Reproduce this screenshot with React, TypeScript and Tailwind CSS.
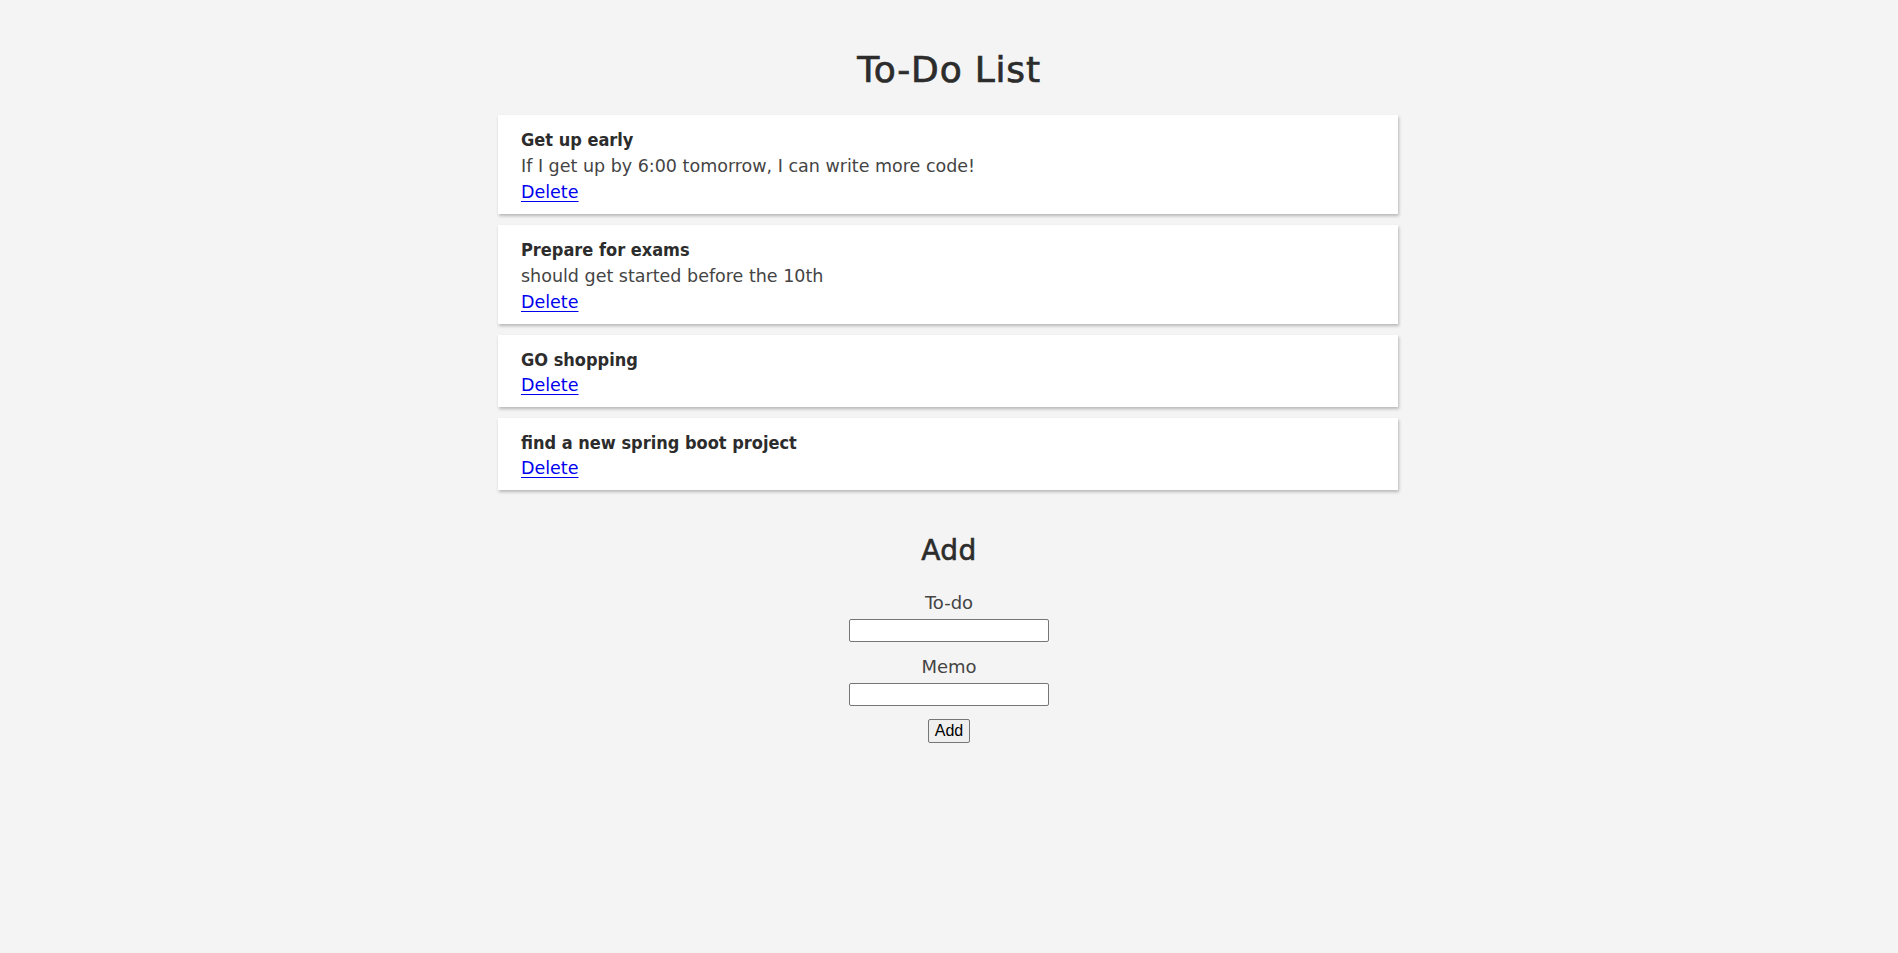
import { useState } from "react";

type Todo = { id: number; title: string; memo?: string };

const initialTodos: Todo[] = [
  { id: 1, title: "Get up early", memo: "If I get up by 6:00 tomorrow, I can write more code!" },
  { id: 2, title: "Prepare for exams", memo: "should get started before the 10th" },
  { id: 3, title: "GO shopping" },
  { id: 4, title: "find a new spring boot project" },
];

export default function App() {
  const [todos, setTodos] = useState<Todo[]>(initialTodos);
  const [title, setTitle] = useState("");
  const [memo, setMemo] = useState("");

  const onAdd = () => {
    if (!title.trim()) return;
    setTodos([...todos, { id: Date.now(), title, memo: memo || undefined }]);
    setTitle("");
    setMemo("");
  };

  return (
    <div className="min-h-screen bg-[#f4f4f4] text-[#2c2c2c] font-['DejaVu_Sans',sans-serif]">
      <h1 className="pt-[48px] text-center text-[36px] leading-[44px] tracking-[0.8px] [-webkit-text-stroke:0.7px]">To-Do List</h1>

      <div className="mx-auto mt-[23px] flex w-[900px] -translate-x-[1px] flex-col gap-[11px]">
        {todos.map(t => (
          <div key={t.id} className="bg-white px-[23px] pt-[11px] pb-[7px] shadow-[1px_2px_3px_rgba(0,0,0,0.25)]">
            <div className="font-['DejaVu_Sans_Condensed',sans-serif] text-[18px] font-bold leading-[27px]">{t.title}</div>
            {t.memo && <div className="text-[17.5px] leading-[27px] text-[#444]">{t.memo}</div>}
            <a href="#" onClick={e => { e.preventDefault(); setTodos(todos.filter(x => x.id !== t.id)); }}
              className="-mt-[1px] mb-[1px] block w-fit text-[17.5px] leading-[27px] text-[#0000ee] underline underline-offset-[3px]">Delete</a>
          </div>
        ))}
      </div>

      <div className="mt-[44px] flex flex-col items-center">
        <h2 className="text-[28px] leading-[33px] tracking-[0.5px] [-webkit-text-stroke:0.6px]">Add</h2>
        <label htmlFor="todo" className="mt-[22px] text-[18px] leading-[27px] text-[#444]">To-do</label>
        <input id="todo" value={title} onChange={e => setTitle(e.target.value)}
          className="mt-[3px] h-[23px] w-[200px] rounded-[2px] border border-[#767676] bg-white px-[2px] text-[13px]" />
        <label htmlFor="memo" className="mt-[11px] text-[18px] leading-[27px] text-[#444]">Memo</label>
        <input id="memo" value={memo} onChange={e => setMemo(e.target.value)}
          className="mt-[3px] h-[23px] w-[200px] rounded-[2px] border border-[#767676] bg-white px-[2px] text-[13px]" />
        <button onClick={onAdd}
          className="mt-[13px] h-[24px] rounded-[2px] border border-[#767676] bg-[#efefef] px-[6px] font-['Liberation_Sans',Arial,sans-serif] text-[16px] leading-[18px] text-black">
          Add
        </button>
      </div>
    </div>
  );
}
